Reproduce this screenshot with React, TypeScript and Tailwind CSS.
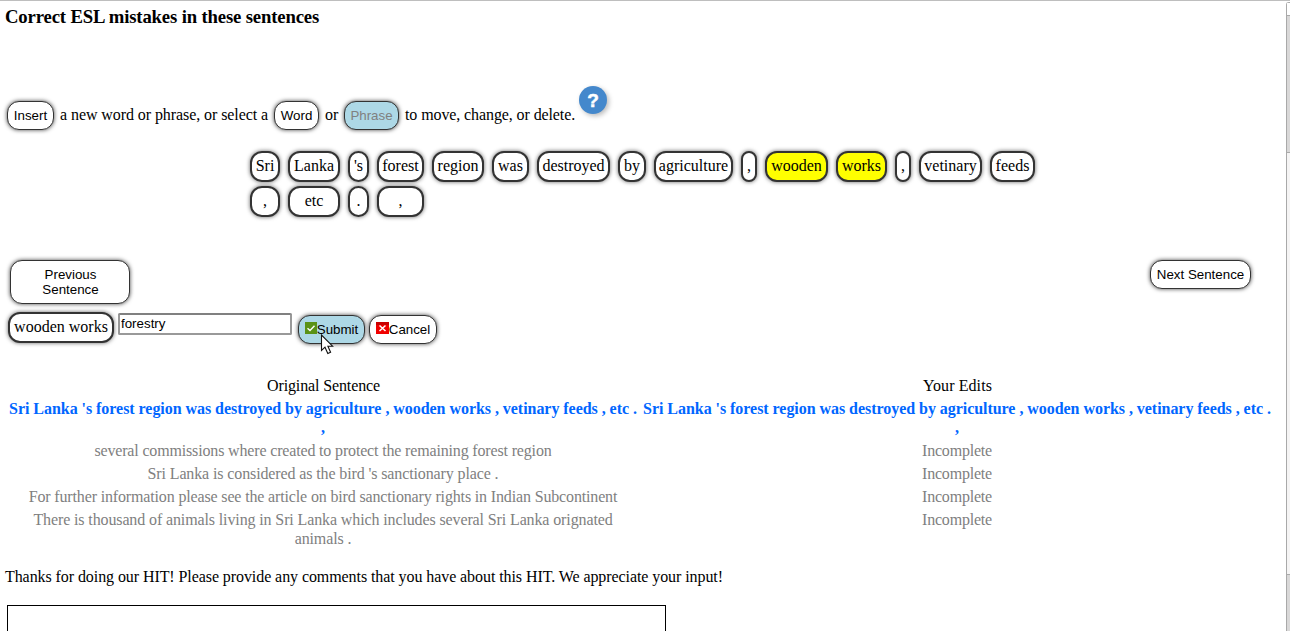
import type { ReactNode } from "react";

const sans = "font-['Liberation_Sans',Arial,sans-serif] text-[13.33px] leading-[15px]";

function Button({ children, className = "bg-white text-black" }: { children: ReactNode; className?: string }) {
  return (
    <button
      className={`${sans} shrink-0 rounded-[12px] border border-[#333] shadow-[0_0_4px_#444] ${className}`}
    >
      {children}
    </button>
  );
}

function Token({ word, width, selected = false }: { word: string; width: number; selected?: boolean }) {
  return (
    <span
      style={{ width }}
      className={`flex h-[31px] shrink-0 justify-center whitespace-nowrap rounded-[12px] border-2 border-[#333] pt-[3px] shadow-[0_0_4px_#666] ${selected ? "bg-[#ffff00]" : "bg-white"}`}
    >
      {word}
    </span>
  );
}

const firstLine: [string, number][] = [
  ["Sri", 30], ["Lanka", 52], ["'s", 21], ["forest", 47], ["region", 52], ["was", 37],
  ["destroyed", 73], ["by", 28], ["agriculture", 79], [",", 16], ["wooden", 63],
  ["works", 51], [",", 16], ["vetinary", 63], ["feeds", 45],
];
const secondLine: [string, number][] = [[",", 30], ["etc", 52], [".", 21], [",", 47]];

const current = "Sri Lanka 's forest region was destroyed by agriculture , wooden works , vetinary feeds , etc . ,";
const pending = [
  { text: "several commissions where created to protect the remaining forest region", tracking: "tracking-[-0.16px]" },
  { text: "Sri Lanka is considered as the bird 's sanctionary place .", tracking: "tracking-[-0.12px]" },
  { text: "For further information please see the article on bird sanctionary rights in Indian Subcontinent", tracking: "tracking-[-0.15px]" },
  { text: "There is thousand of animals living in Sri Lanka which includes several Sri Lanka orignated animals .", tracking: "tracking-[-0.12px]" },
];

function CheckIcon() {
  return (
    <svg width="12" height="12" viewBox="0 0 12 12" className="mb-[3px] shrink-0">
      <rect width="12" height="12" fill="#5a9216" />
      <path d="M2.5 6.2 5 8.5 9.5 3.8" fill="none" stroke="#fff" strokeWidth="1.4" />
    </svg>
  );
}

function CrossIcon() {
  return (
    <svg width="13" height="12" viewBox="0 0 13 12" className="mb-[3px] shrink-0">
      <rect width="13" height="12" fill="#f00000" />
      <rect width="13" height="3" fill="#c80000" />
      <path d="M3.5 3.5 9.5 9M9.5 3.5 3.5 9" fill="none" stroke="#fff" strokeWidth="1.5" />
    </svg>
  );
}

function Scrollbar() {
  return (
    <div className="flex w-[4px] shrink-0 flex-col pt-[1px]">
      <div className="flex flex-1 flex-col rounded-tl-[3px] border-l border-t border-[#a9a9a9]">
        <div className="h-[12px] bg-white" />
        <div className="h-[138px] border-y border-[#aaa] bg-[#d9d8d8]" />
        <div className="h-[421px] bg-[#f5f4f4]" />
        <div className="flex-1 border-t border-[#aaa] bg-[#d9d8d8]" />
      </div>
    </div>
  );
}

export default function App() {
  return (
    <div className="flex h-[631px] w-[1290px] overflow-hidden border-t border-[#bebebe] bg-white font-['Liberation_Serif','Times_New_Roman',serif] text-[16px] leading-[19px] text-black">
      <main className="flex w-[1286px] shrink-0 flex-col">
        <h1 className="mt-[5px] h-[22px] shrink-0 pl-[5px] text-[18.72px] font-bold leading-[22px] tracking-[-0.155px]">Correct ESL mistakes in these sentences</h1>

        <div className="mt-[58px] flex h-[45px] shrink-0 items-start whitespace-nowrap pl-[7px]">
          <Button className="mt-[15px] h-[29px] w-[47px] bg-white pb-[1px]">Insert</Button>
          <span className="mt-[19px] w-[220px] pl-[6px] tracking-[-0.075px]">a new word or phrase, or select a</span>
          <Button className="mt-[15px] h-[29px] w-[45px] bg-white pb-[1px]">Word</Button>
          <span className="mt-[19px] w-[25px] pl-[6px]">or</span>
          <Button className="mt-[15px] h-[29px] w-[55px] bg-[#add8e6] pb-[1px] text-[#808080]">Phrase</Button>
          <span className="mt-[19px] w-[180px] pl-[6px] tracking-[-0.1px]">to move, change, or delete.</span>
          <span className="flex size-[28px] shrink-0 items-center justify-center rounded-full bg-[#4488cc] font-['Liberation_Sans',Arial,sans-serif] text-[19px] font-bold text-white shadow-[2px_2px_5px_#bbb] [-webkit-text-stroke:0.5px_white]">?</span>
        </div>

        <div className="mt-[20px] flex shrink-0 flex-col gap-[4px] pl-[250px]">
          <div className="flex gap-[8px]">
            {firstLine.map(([word, width], i) => (
              <Token key={i} word={word} width={width} selected={i === 10 || i === 11} />
            ))}
          </div>
          <div className="flex gap-[8px]">
            {secondLine.map(([word, width], i) => (
              <Token key={i} word={word} width={width} />
            ))}
          </div>
        </div>

        <div className="mt-[43px] flex h-[44px] shrink-0 items-start justify-between pl-[10px] pr-[35px]">
          <Button className="h-[44px] w-[120px] bg-white pl-[21px] pr-[20px]">Previous Sentence</Button>
          <Button className="h-[29px] w-[101px] whitespace-nowrap bg-white pb-[1px]">Next Sentence</Button>
        </div>

        <div className="mt-[8px] flex h-[32px] shrink-0 items-start pl-[8px]">
          <Token word="wooden works" width={106} />
          <input
            type="text"
            defaultValue="forestry"
            className={`${sans} ml-[4px] mt-[1px] h-[22px] w-[174px] shrink-0 rounded-[2px] border-2 border-[#999] border-t-[#808080] bg-white px-[1px] pb-[1px] outline-none`}
          />
          <div className="relative ml-[6px] mt-[3px]">
            <Button className="flex h-[29px] w-[67px] items-center justify-center bg-[#add8e6]">
              <CheckIcon />
              Submit
            </Button>
            <svg width="14" height="21" viewBox="0 0 14 21" className="absolute left-[22px] top-[19px]">
              <path d="M1.5 1V16.5L5 13.2 7.8 19.5 10.6 18.2 7.9 12.2H12.6Z" fill="#fff" stroke="#111" strokeWidth="1.1" />
            </svg>
          </div>
          <Button className="ml-[4px] mt-[3px] flex h-[29px] w-[68px] items-center justify-center bg-white">
            <CrossIcon />
            Cancel
          </Button>
        </div>

        <div className="ml-[7px] mt-[32px] grid w-[1266px] shrink-0 grid-cols-2 gap-x-[2px] gap-y-[4px] self-start text-center">
          <div className="pl-[1px] tracking-[-0.12px]">Original Sentence</div>
          <div className="pl-[1px] tracking-[0.08px]">Your Edits</div>
          <div className="font-bold tracking-[-0.045px] text-[#0066ff]">{current}</div>
          <div className="font-bold tracking-[-0.045px] text-[#0066ff]">{current}</div>
          {pending.map(({ text, tracking }) => (
            <div key={text} className="contents text-[#808080]">
              <div className={`px-[16px] ${tracking}`}>{text}</div>
              <div className="tracking-[-0.2px]">Incomplete</div>
            </div>
          ))}
        </div>

        <p className="mt-[19px] shrink-0 pl-[5px] tracking-[-0.077px]">Thanks for doing our HIT! Please provide any comments that you have about this HIT. We appreciate your input!</p>
        <textarea className="ml-[7px] mt-[19px] h-[100px] w-[659px] shrink-0 resize-none border border-black bg-white outline-none" />
      </main>
      <Scrollbar />
    </div>
  );
}
